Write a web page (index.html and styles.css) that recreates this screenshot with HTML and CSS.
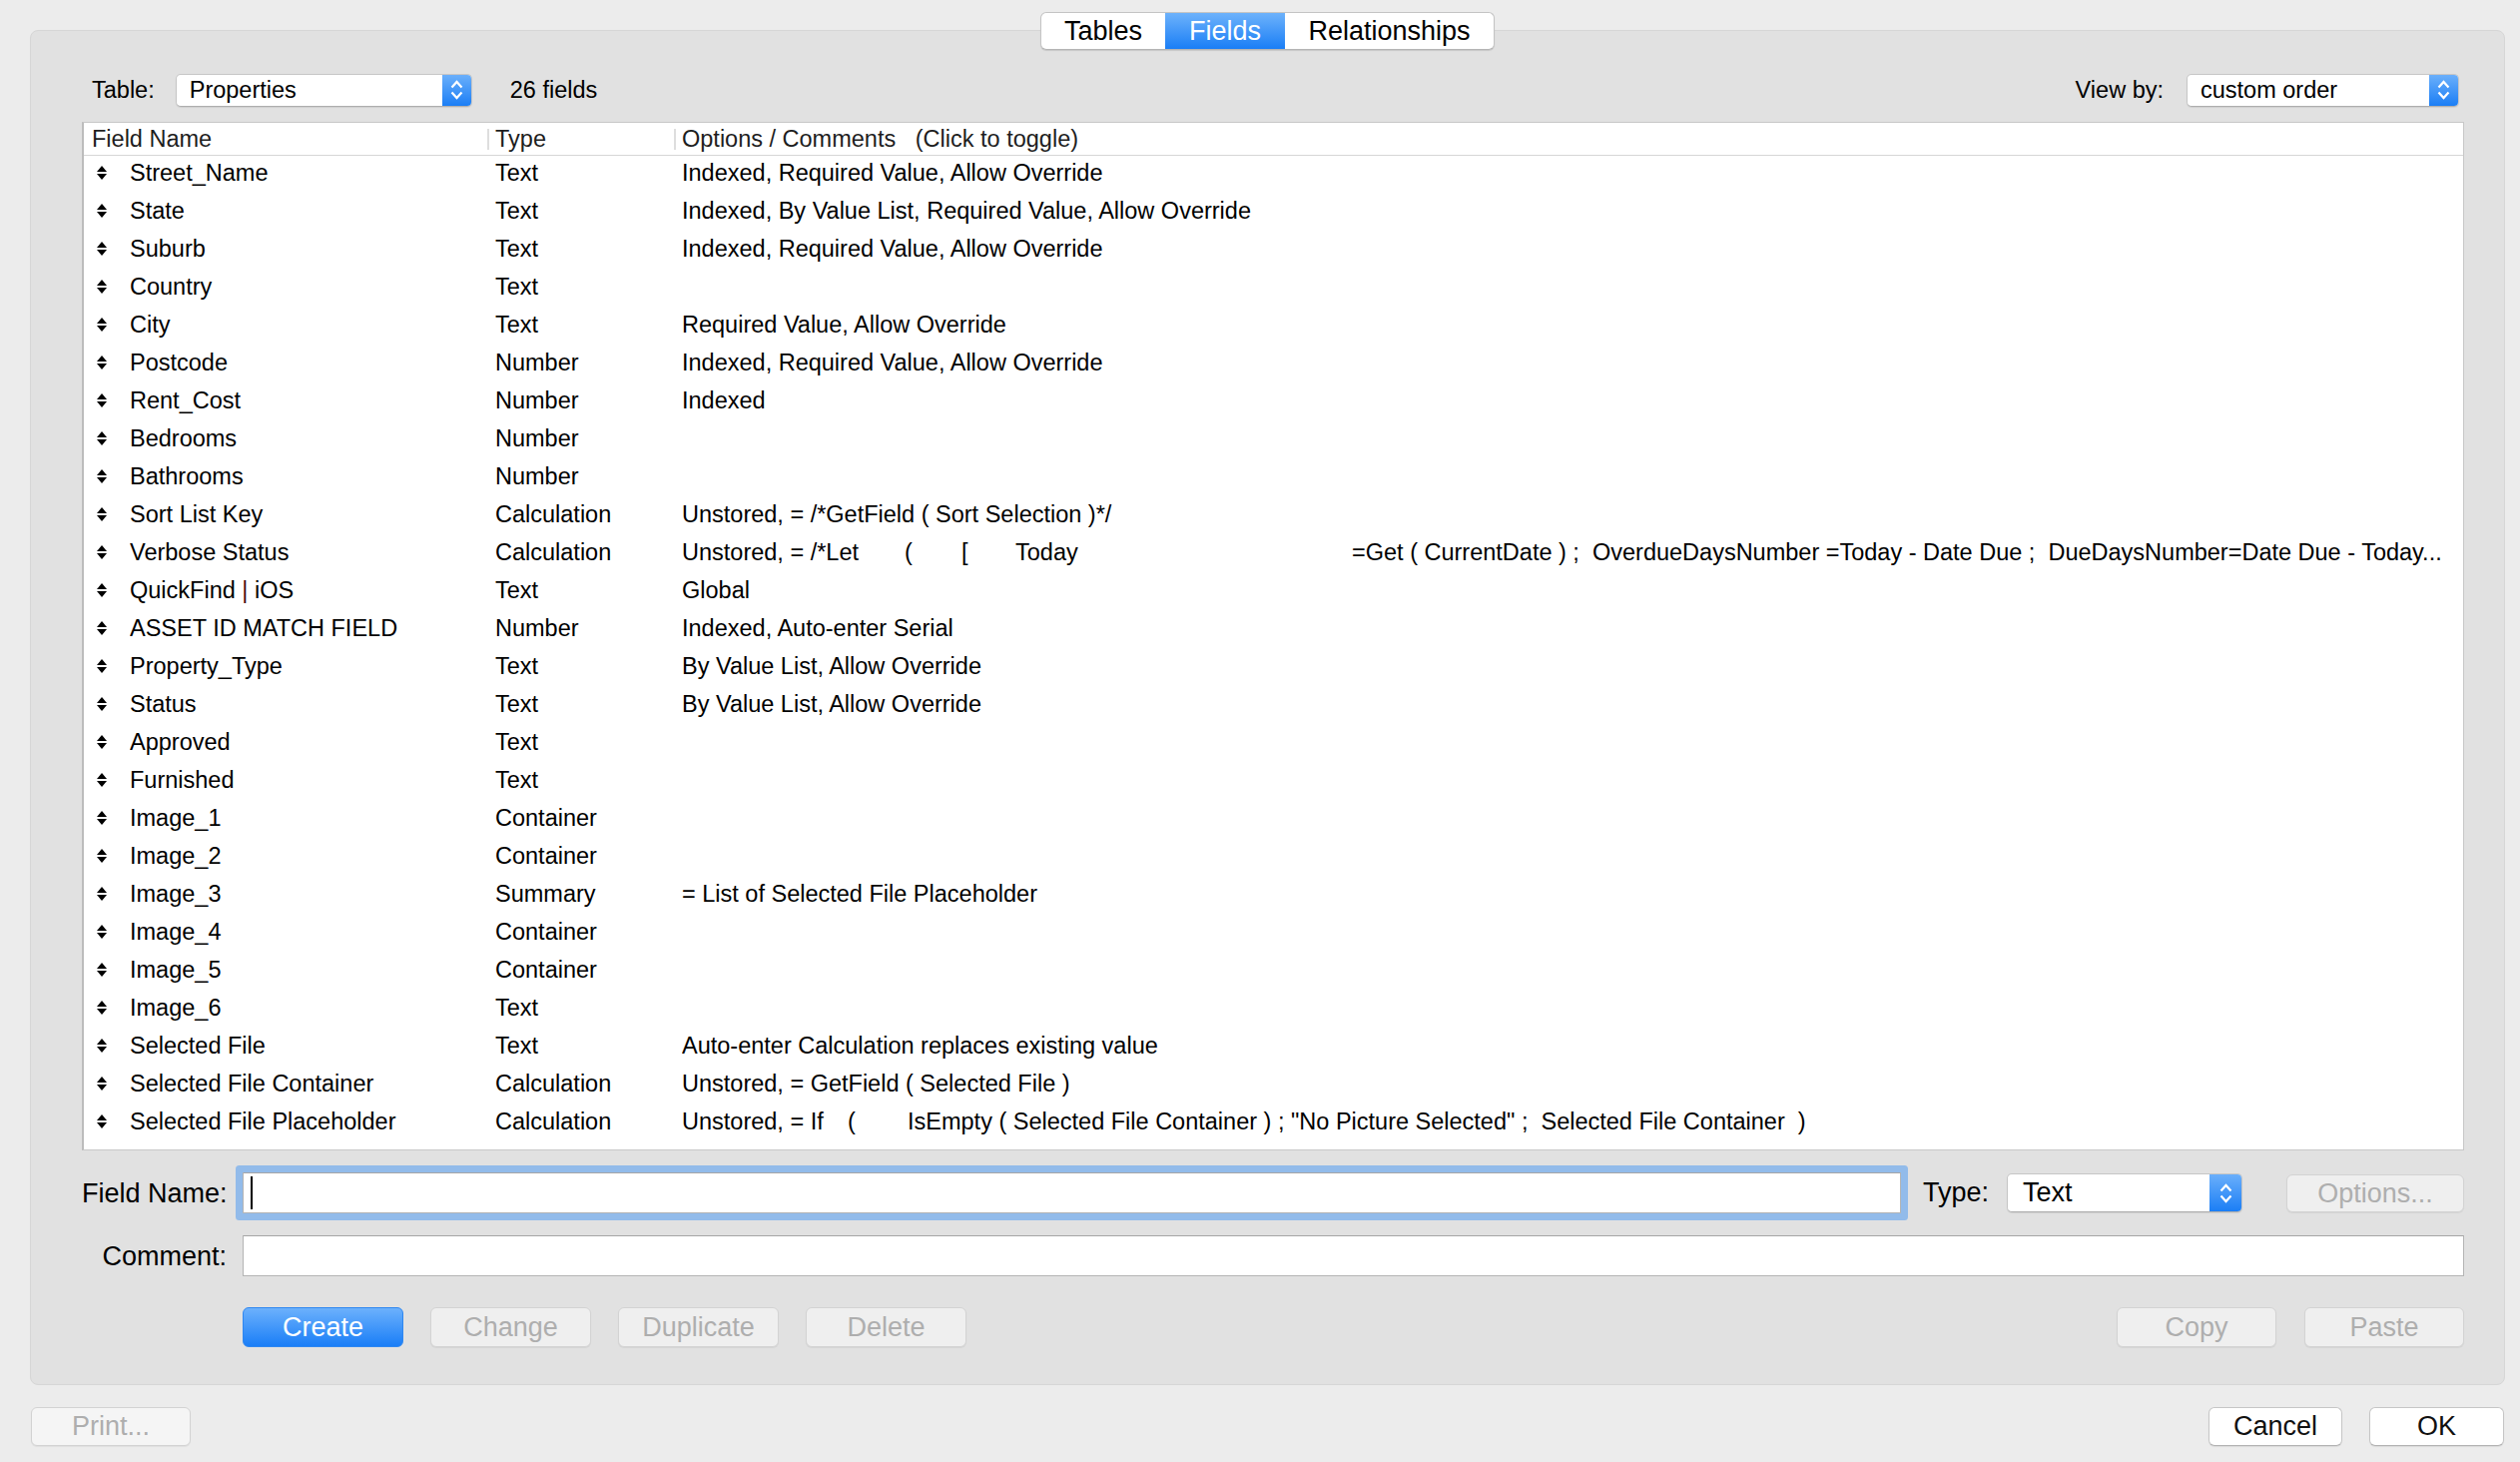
FILE: index.html
```html
<!DOCTYPE html>
<html>
<head>
<meta charset="utf-8">
<title>Manage Database</title>
<link rel="stylesheet" href="styles.css">
</head>
<body>
<div class="window">
  <div class="tabs-row">
    <div class="seg">
      <div class="tab t-tables">Tables</div>
      <div class="tab t-fields active">Fields</div>
      <div class="tab t-rel">Relationships</div>
    </div>
  </div>

  <div class="panel">
    <div class="topbar">
      <div class="tb-left">
        <span class="lbl">Table:</span>
        <div class="popup w-table">
          <span class="pv">Properties</span>
          <span class="parr"><svg width="13" height="22" viewBox="0 0 13 22"><polyline points="1.5,8.5 6.5,3 11.5,8.5" fill="none" stroke="#fff" stroke-width="2.2"/><polyline points="1.5,13.5 6.5,19 11.5,13.5" fill="none" stroke="#fff" stroke-width="2.2"/></svg></span>
        </div>
        <span class="count">26 fields</span>
      </div>
      <div class="tb-right">
        <span class="lbl">View by:</span>
        <div class="popup w-view">
          <span class="pv">custom order</span>
          <span class="parr"><svg width="13" height="22" viewBox="0 0 13 22"><polyline points="1.5,8.5 6.5,3 11.5,8.5" fill="none" stroke="#fff" stroke-width="2.2"/><polyline points="1.5,13.5 6.5,19 11.5,13.5" fill="none" stroke="#fff" stroke-width="2.2"/></svg></span>
        </div>
      </div>
    </div>

    <div class="list">
      <div class="lhead">
        <div class="hc hc-name">Field Name</div>
        <div class="hc"><span class="sep"></span>Type</div>
        <div class="hc"><span class="sep"></span>Options / Comments   (Click to toggle)</div>
      </div>

      <div class="row"><div class="h"><svg class="ud" width="10" height="14" viewBox="0 0 10 14"><polygon points="5,0 10,6 0,6" fill="#000"/><polygon points="0,8 10,8 5,14" fill="#000"/></svg></div><div class="c">Street_Name</div><div class="c">Text</div><div class="c o">Indexed, Required Value, Allow Override</div></div>
      <div class="row"><div class="h"><svg class="ud" width="10" height="14" viewBox="0 0 10 14"><polygon points="5,0 10,6 0,6" fill="#000"/><polygon points="0,8 10,8 5,14" fill="#000"/></svg></div><div class="c">State</div><div class="c">Text</div><div class="c o">Indexed, By Value List, Required Value, Allow Override</div></div>
      <div class="row"><div class="h"><svg class="ud" width="10" height="14" viewBox="0 0 10 14"><polygon points="5,0 10,6 0,6" fill="#000"/><polygon points="0,8 10,8 5,14" fill="#000"/></svg></div><div class="c">Suburb</div><div class="c">Text</div><div class="c o">Indexed, Required Value, Allow Override</div></div>
      <div class="row"><div class="h"><svg class="ud" width="10" height="14" viewBox="0 0 10 14"><polygon points="5,0 10,6 0,6" fill="#000"/><polygon points="0,8 10,8 5,14" fill="#000"/></svg></div><div class="c">Country</div><div class="c">Text</div><div class="c o"></div></div>
      <div class="row"><div class="h"><svg class="ud" width="10" height="14" viewBox="0 0 10 14"><polygon points="5,0 10,6 0,6" fill="#000"/><polygon points="0,8 10,8 5,14" fill="#000"/></svg></div><div class="c">City</div><div class="c">Text</div><div class="c o">Required Value, Allow Override</div></div>
      <div class="row"><div class="h"><svg class="ud" width="10" height="14" viewBox="0 0 10 14"><polygon points="5,0 10,6 0,6" fill="#000"/><polygon points="0,8 10,8 5,14" fill="#000"/></svg></div><div class="c">Postcode</div><div class="c">Number</div><div class="c o">Indexed, Required Value, Allow Override</div></div>
      <div class="row"><div class="h"><svg class="ud" width="10" height="14" viewBox="0 0 10 14"><polygon points="5,0 10,6 0,6" fill="#000"/><polygon points="0,8 10,8 5,14" fill="#000"/></svg></div><div class="c">Rent_Cost</div><div class="c">Number</div><div class="c o">Indexed</div></div>
      <div class="row"><div class="h"><svg class="ud" width="10" height="14" viewBox="0 0 10 14"><polygon points="5,0 10,6 0,6" fill="#000"/><polygon points="0,8 10,8 5,14" fill="#000"/></svg></div><div class="c">Bedrooms</div><div class="c">Number</div><div class="c o"></div></div>
      <div class="row"><div class="h"><svg class="ud" width="10" height="14" viewBox="0 0 10 14"><polygon points="5,0 10,6 0,6" fill="#000"/><polygon points="0,8 10,8 5,14" fill="#000"/></svg></div><div class="c">Bathrooms</div><div class="c">Number</div><div class="c o"></div></div>
      <div class="row"><div class="h"><svg class="ud" width="10" height="14" viewBox="0 0 10 14"><polygon points="5,0 10,6 0,6" fill="#000"/><polygon points="0,8 10,8 5,14" fill="#000"/></svg></div><div class="c">Sort List Key</div><div class="c">Calculation</div><div class="c o">Unstored, = /*GetField ( Sort Selection )*/</div></div>
      <div class="row"><div class="h"><svg class="ud" width="10" height="14" viewBox="0 0 10 14"><polygon points="5,0 10,6 0,6" fill="#000"/><polygon points="0,8 10,8 5,14" fill="#000"/></svg></div><div class="c">Verbose Status</div><div class="c">Calculation</div><div class="c o"><span class="ts ts-v1">Unstored, = /*Let</span><span class="ts ts-v2">(</span><span class="ts ts-v3">[</span><span class="ts ts-v4">Today</span>=Get ( CurrentDate ) ;  OverdueDaysNumber =Today - Date Due ;  DueDaysNumber=Date Due - Today...</div></div>
      <div class="row"><div class="h"><svg class="ud" width="10" height="14" viewBox="0 0 10 14"><polygon points="5,0 10,6 0,6" fill="#000"/><polygon points="0,8 10,8 5,14" fill="#000"/></svg></div><div class="c">QuickFind <span class="pipe">|</span> iOS</div><div class="c">Text</div><div class="c o">Global</div></div>
      <div class="row"><div class="h"><svg class="ud" width="10" height="14" viewBox="0 0 10 14"><polygon points="5,0 10,6 0,6" fill="#000"/><polygon points="0,8 10,8 5,14" fill="#000"/></svg></div><div class="c">ASSET ID MATCH FIELD</div><div class="c">Number</div><div class="c o">Indexed, Auto-enter Serial</div></div>
      <div class="row"><div class="h"><svg class="ud" width="10" height="14" viewBox="0 0 10 14"><polygon points="5,0 10,6 0,6" fill="#000"/><polygon points="0,8 10,8 5,14" fill="#000"/></svg></div><div class="c">Property_Type</div><div class="c">Text</div><div class="c o">By Value List, Allow Override</div></div>
      <div class="row"><div class="h"><svg class="ud" width="10" height="14" viewBox="0 0 10 14"><polygon points="5,0 10,6 0,6" fill="#000"/><polygon points="0,8 10,8 5,14" fill="#000"/></svg></div><div class="c">Status</div><div class="c">Text</div><div class="c o">By Value List, Allow Override</div></div>
      <div class="row"><div class="h"><svg class="ud" width="10" height="14" viewBox="0 0 10 14"><polygon points="5,0 10,6 0,6" fill="#000"/><polygon points="0,8 10,8 5,14" fill="#000"/></svg></div><div class="c">Approved</div><div class="c">Text</div><div class="c o"></div></div>
      <div class="row"><div class="h"><svg class="ud" width="10" height="14" viewBox="0 0 10 14"><polygon points="5,0 10,6 0,6" fill="#000"/><polygon points="0,8 10,8 5,14" fill="#000"/></svg></div><div class="c">Furnished</div><div class="c">Text</div><div class="c o"></div></div>
      <div class="row"><div class="h"><svg class="ud" width="10" height="14" viewBox="0 0 10 14"><polygon points="5,0 10,6 0,6" fill="#000"/><polygon points="0,8 10,8 5,14" fill="#000"/></svg></div><div class="c">Image_1</div><div class="c">Container</div><div class="c o"></div></div>
      <div class="row"><div class="h"><svg class="ud" width="10" height="14" viewBox="0 0 10 14"><polygon points="5,0 10,6 0,6" fill="#000"/><polygon points="0,8 10,8 5,14" fill="#000"/></svg></div><div class="c">Image_2</div><div class="c">Container</div><div class="c o"></div></div>
      <div class="row"><div class="h"><svg class="ud" width="10" height="14" viewBox="0 0 10 14"><polygon points="5,0 10,6 0,6" fill="#000"/><polygon points="0,8 10,8 5,14" fill="#000"/></svg></div><div class="c">Image_3</div><div class="c">Summary</div><div class="c o">= List of Selected File Placeholder</div></div>
      <div class="row"><div class="h"><svg class="ud" width="10" height="14" viewBox="0 0 10 14"><polygon points="5,0 10,6 0,6" fill="#000"/><polygon points="0,8 10,8 5,14" fill="#000"/></svg></div><div class="c">Image_4</div><div class="c">Container</div><div class="c o"></div></div>
      <div class="row"><div class="h"><svg class="ud" width="10" height="14" viewBox="0 0 10 14"><polygon points="5,0 10,6 0,6" fill="#000"/><polygon points="0,8 10,8 5,14" fill="#000"/></svg></div><div class="c">Image_5</div><div class="c">Container</div><div class="c o"></div></div>
      <div class="row"><div class="h"><svg class="ud" width="10" height="14" viewBox="0 0 10 14"><polygon points="5,0 10,6 0,6" fill="#000"/><polygon points="0,8 10,8 5,14" fill="#000"/></svg></div><div class="c">Image_6</div><div class="c">Text</div><div class="c o"></div></div>
      <div class="row"><div class="h"><svg class="ud" width="10" height="14" viewBox="0 0 10 14"><polygon points="5,0 10,6 0,6" fill="#000"/><polygon points="0,8 10,8 5,14" fill="#000"/></svg></div><div class="c">Selected File</div><div class="c">Text</div><div class="c o">Auto-enter Calculation replaces existing value</div></div>
      <div class="row"><div class="h"><svg class="ud" width="10" height="14" viewBox="0 0 10 14"><polygon points="5,0 10,6 0,6" fill="#000"/><polygon points="0,8 10,8 5,14" fill="#000"/></svg></div><div class="c">Selected File Container</div><div class="c">Calculation</div><div class="c o">Unstored, = GetField ( Selected File )</div></div>
      <div class="row"><div class="h"><svg class="ud" width="10" height="14" viewBox="0 0 10 14"><polygon points="5,0 10,6 0,6" fill="#000"/><polygon points="0,8 10,8 5,14" fill="#000"/></svg></div><div class="c">Selected File Placeholder</div><div class="c">Calculation</div><div class="c o"><span class="ts ts-p1">Unstored, = If</span><span class="ts ts-p2">(</span>IsEmpty ( Selected File Container ) ; "No Picture Selected" ;  Selected File Container  )</div></div>
    </div>

    <div class="form">
      <div class="frow">
        <span class="flabel">Field Name:</span>
        <div class="input focus"><span class="caret"></span></div>
        <span class="tlabel">Type:</span>
        <div class="popup w-type">
          <span class="pv">Text</span>
          <span class="parr"><svg width="13" height="22" viewBox="0 0 13 22"><polyline points="1.5,8.5 6.5,3 11.5,8.5" fill="none" stroke="#fff" stroke-width="2.2"/><polyline points="1.5,13.5 6.5,19 11.5,13.5" fill="none" stroke="#fff" stroke-width="2.2"/></svg></span>
        </div>
        <div class="btn dis b-options">Options...</div>
      </div>
      <div class="frow crow">
        <span class="flabel">Comment:</span>
        <div class="input grow"></div>
      </div>
      <div class="brow">
        <div class="bgroup">
          <div class="btn primary">Create</div>
          <div class="btn dis">Change</div>
          <div class="btn dis">Duplicate</div>
          <div class="btn dis">Delete</div>
        </div>
        <div class="bgroup">
          <div class="btn dis b-small">Copy</div>
          <div class="btn dis b-small">Paste</div>
        </div>
      </div>
    </div>
  </div>

  <div class="bottom">
    <div class="btn dis light b-print">Print...</div>
    <div class="bgroup">
      <div class="btn plain b-cancel">Cancel</div>
      <div class="btn plain b-ok">OK</div>
    </div>
  </div>
</div>
</body>
</html>
```

FILE: styles.css
```css
* { box-sizing: border-box; }
html, body { margin: 0; padding: 0; }
body {
  background: #ececec;
  font-family: "Liberation Sans", Arial, sans-serif;
  color: #000;
}
.window {
  width: 2524px;
  height: 1464px;
  padding-top: 12px;
  overflow: hidden;
}

/* segmented tabs */
.tabs-row {
  margin-left: 30px;
  width: 2479px;
  height: 38px;
  display: flex;
  justify-content: center;
  position: relative;
  z-index: 2;
}
.seg {
  display: flex;
  height: 38px;
  background: #fff;
  border: 1px solid #c4c4c4;
  border-bottom-color: #b4b4b4;
  border-radius: 6px;
  overflow: hidden;
  box-shadow: 0 1px 1px rgba(0,0,0,0.12);
}
.tab {
  height: 36px;
  line-height: 36px;
  font-size: 27px;
  text-align: center;
  color: #000;
}
.t-tables { width: 124px; }
.t-fields { width: 120px; }
.t-rel { width: 209px; }
.tab.active {
  background: linear-gradient(#6db2fb, #1a7ef6);
  color: #fff;
}

/* panel */
.panel {
  margin-top: -20px;
  margin-left: 30px;
  width: 2479px;
  height: 1357px;
  background: #e1e1e1;
  border: 1px solid #d6d6d6;
  border-radius: 8px;
  padding: 42px 40px 0 51px;
}
.topbar {
  height: 34px;
  display: flex;
  align-items: center;
  justify-content: space-between;
  font-size: 23.5px;
}
.tb-left, .tb-right { display: flex; align-items: center; }
.tb-left { margin-left: 10px; }
.tb-right { margin-right: 5px; }
.lbl { color: #000; white-space: nowrap; }
.tb-left .popup { margin-left: 21px; }
.tb-right .popup { margin-left: 23px; }
.count { margin-left: 38px; }

.popup {
  display: flex;
  height: 33px;
  background: #fff;
  border: 1px solid #c6c6c6;
  border-bottom-color: #aeaeae;
  border-radius: 5px;
  overflow: hidden;
  box-shadow: 0 1px 1px rgba(0,0,0,0.08);
}
.popup .pv {
  flex: 1;
  padding-left: 13px;
  line-height: 31px;
  white-space: nowrap;
}
.popup .parr {
  width: 29px;
  background: linear-gradient(#6aaffb, #1b7ef5);
  display: flex;
  align-items: center;
  justify-content: center;
}
.w-table { width: 297px; }
.w-view { width: 273px; }

/* list */
.list {
  margin-top: 15px;
  height: 1030px;
  background: #fff;
  border: 1px solid #c8c8c8;
  border-left: 2px solid #bcbcbc;
  font-size: 23.5px;
  overflow: hidden;
}
.lhead {
  height: 33px;
  border-bottom: 1px solid #d6d6d6;
  display: grid;
  grid-template-columns: 404px 187px 1fr;
  line-height: 32px;
  color: #1e1e1e;
}
.hc {
  display: flex;
  align-items: center;
  white-space: pre;
}
.hc-name { padding-left: 8px; }
.sep {
  width: 2px;
  height: 21px;
  background: #dedede;
  margin-right: 6px;
  flex: none;
}
.row {
  height: 38px;
  display: grid;
  grid-template-columns: 46px 366px 187px 1fr;
  line-height: 34px;
  color: #000;
}
.row .h {
  height: 34px;
  padding-left: 13px;
  display: flex;
  align-items: center;
}
.row .c {
  white-space: pre;
  overflow: hidden;
}
.row .o { padding-right: 16px; }
.ts { display: inline-block; white-space: pre; }
.ts-v1 { width: 223px; }
.ts-v2 { width: 57px; }
.ts-v3 { width: 54px; }
.ts-v4 { width: 337px; }
.ts-p1 { width: 166px; }
.ts-p2 { width: 60px; }
.pipe { color: #4a0a0a; }

/* form */
.form { margin-top: 22px; }
.frow {
  display: flex;
  align-items: center;
  height: 41px;
  font-size: 27px;
}
.crow { margin-top: 22px; }
.flabel {
  width: 145px;
  margin-right: 16px;
  text-align: right;
  white-space: nowrap;
  color: #000;
  padding-top: 2px;
}
.input {
  height: 41px;
  background: #fff;
  border: 1px solid #b4b4b4;
  border-top-color: #a6a6a6;
}
.input.focus {
  width: 1661px;
  border-radius: 1px;
  box-shadow: 0 0 0 7px #92bbea;
  display: flex;
  align-items: center;
  padding-left: 7px;
}
.caret {
  width: 2px;
  height: 33px;
  background: #000;
}
.input.grow { flex: 1; }
.tlabel {
  width: 64px;
  margin-left: 22px;
  white-space: nowrap;
}
.w-type {
  width: 236px;
  height: 39px;
  margin-left: 20px;
}
.w-type .pv { line-height: 37px; padding-left: 15px; }
.w-type .parr { width: 32px; }

.btn {
  height: 39px;
  line-height: 37px;
  font-size: 27px;
  text-align: center;
  border-radius: 6px;
  border: 1px solid #d0d0d0;
  white-space: nowrap;
}
.btn.dis {
  background: #efefef;
  color: #aeaeae;
  border-color: #d3d3d3;
  box-shadow: 0 1px 1px rgba(0,0,0,0.06);
}
.btn.primary {
  background: linear-gradient(#6cb1fc, #1a7ef7);
  border-color: #2f87f0;
  color: #fff;
}
.b-options { width: 178px; height: 38px; margin-left: 44px; }

.brow {
  margin-top: 31px;
  display: flex;
  justify-content: space-between;
}
.bgroup { display: flex; gap: 27px; }
.brow .bgroup:first-child { margin-left: 161px; }
.brow .btn { width: 161px; height: 40px; line-height: 38px; }
.brow .b-small { width: 160px; }
.brow .bgroup:last-child { gap: 28px; }

/* bottom bar */
.bottom {
  margin-top: 22px;
  padding-left: 31px;
  padding-right: 16px;
  display: flex;
  justify-content: space-between;
}
.btn.light { background: #f5f5f5; }
.b-print { width: 160px; }
.btn.plain {
  background: #fff;
  color: #111;
  border-color: #c6c6c6;
  border-bottom-color: #b2b2b2;
  box-shadow: 0 1px 1px rgba(0,0,0,0.08);
}
.b-cancel { width: 134px; }
.b-ok { width: 135px; }
```
